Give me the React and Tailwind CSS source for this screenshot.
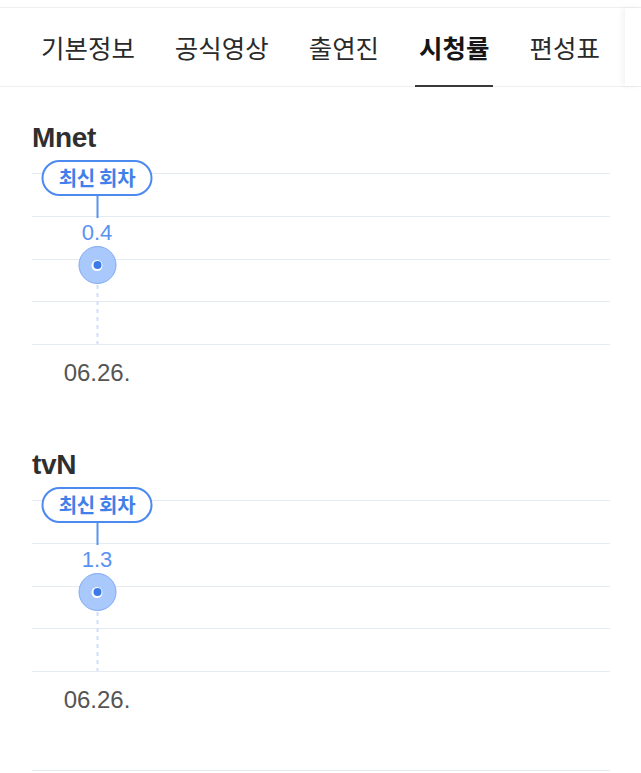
import React from 'react'

const tabs = ['기본정보', '공식영상', '출연진', '시청률', '편성표']

const channels = [
  { name: 'Mnet', rating: '0.4', date: '06.26.' },
  { name: 'tvN', rating: '1.3', date: '06.26.' },
]

const font = { fontFamily: '"Liberation Sans", "Noto Sans CJK KR", sans-serif' }
const krFont = { fontFamily: '"Noto Sans CJK KR", sans-serif' }

const TabBar = () => (
  <div className="pt-[7px]">
    <div className="relative border-t border-b border-[#efefef] bg-white">
      <div className="flex h-[78px] items-stretch gap-[32px] pl-[37px]">
        {tabs.map((t) => {
          const active = t === '시청률'
          return (
            <div key={t} className="relative flex items-center px-[4px]">
              <span
                className={
                  active
                    ? 'text-[25.5px] font-bold text-[#161616]'
                    : 'text-[25.5px] text-[#2a2a2a]'
                }
                style={krFont}
              >
                {t}
              </span>
              {active && <div className="absolute left-0 right-0 bottom-[-1px] h-[2px] bg-[#3a3a3a]" />}
            </div>
          )
        })}
      </div>
      <div className="absolute right-0 top-0 bottom-0 w-[16px] bg-white shadow-[-3px_0_6px_rgba(0,0,0,0.05)]" />
    </div>
  </div>
)

// one data point: badge, connector, value, dot and the dashed drop line
const Marker = ({ rating }) => (
  <div className="absolute left-[65px] top-[-13px] flex -translate-x-1/2 flex-col items-center">
    <div className="flex h-[36px] w-[111px] items-center justify-center rounded-full border-2 border-[#4d8af0] bg-white">
      <span className="text-[20px] font-bold leading-none text-[#3f80ea] tracking-[-0.3px]" style={krFont}>
        최신 회차
      </span>
    </div>
    <div className="h-[22px] w-[2px] bg-[#5b93f1]" />
    <div className="mt-[4px] text-[22px] leading-none text-[#5893f1]" style={font}>
      {rating}
    </div>
    <div className="mt-[2px] flex h-[38px] w-[38px] items-center justify-center rounded-full border-[1.5px] border-[#7eaaf5] bg-[#a9c8fb]">
      <div className="flex h-[11px] w-[11px] items-center justify-center rounded-full bg-white">
        <div className="h-[8px] w-[8px] rounded-full bg-[#3a7be9]" />
      </div>
    </div>
    <div className="mt-[1px] h-[59px] w-[2px] bg-[repeating-linear-gradient(to_bottom,#cfe0f9_0,#cfe0f9_4px,transparent_4px,transparent_8px)]" />
  </div>
)

const Chart = ({ rating }) => (
  <div className="relative">
    <div className="border-t border-[#e4ecf2]" />
    {[0, 1, 2, 3].map((i) => (
      <div key={i} className="h-[42.75px] border-b border-[#e4ecf2]" />
    ))}
    <Marker rating={rating} />
  </div>
)

const ChannelSection = ({ name, rating, date }) => (
  <section className="flex flex-col">
    <h2 className="text-[28px] font-bold leading-none text-[#2f2f2f] tracking-[-0.3px]" style={font}>
      {name}
    </h2>
    <div className="mt-[21px]">
      <Chart rating={rating} />
    </div>
    <div className="mt-[16px] w-[130px] text-center text-[24px] leading-none text-[#555555]" style={font}>
      {date}
    </div>
  </section>
)

export default function App() {
  return (
    <div className="min-h-[773px] w-[641px] bg-white" style={font}>
      <TabBar />
      <div className="flex flex-col gap-[66px] pl-[32px] pr-[31px] pt-[37px]">
        <ChannelSection {...channels[0]} />
        <ChannelSection {...channels[1]} />
      </div>
      <div className="mx-[32px] mr-[31px] mt-[58px] border-t border-[#e4ecf2]" />
    </div>
  )
}
